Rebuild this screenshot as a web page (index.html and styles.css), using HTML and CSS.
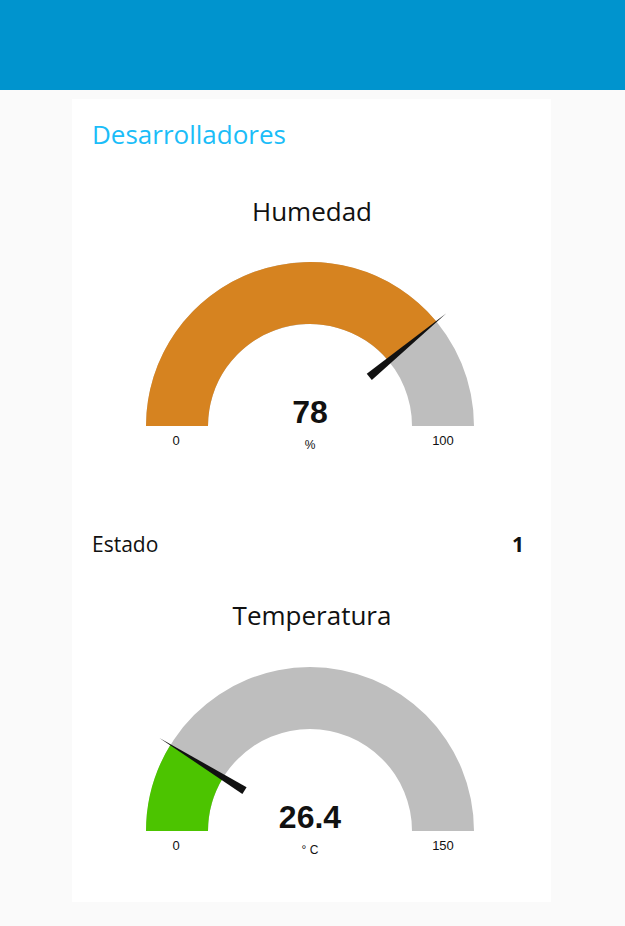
FILE: index.html
```html
<!DOCTYPE html>
<html lang="es">
<head>
<meta charset="utf-8">
<title>Dashboard</title>
<link rel="stylesheet" href="styles.css">
</head>
<body>
<header class="toolbar"></header>
<main class="content">
  <section class="card">
    <h2 class="card-title">Desarrolladores</h2>
    <div class="gauge">
      <svg class="gauge-svg" width="479" height="300" viewBox="0 0 479 300">
        <text class="g-title" x="240" y="51">Humedad</text>
        <path class="g-bg" d="M 74 256 A 164 164 0 0 1 402 256 L 340 256 A 102 102 0 0 0 136 256 Z"/>
        <path class="g-fill-orange" d="M 74 256 A 164 164 0 0 1 364.36 151.47 L 316.59 190.99 A 102 102 0 0 0 136 256 Z"/>
        <polygon class="g-needle" points="299.85,209.98 374.4,143.2 294.75,203.82"/>
        <text class="g-value" x="238" y="253">78</text>
        <text class="g-unit" x="238" y="279">%</text>
        <text class="g-limit" x="104" y="275">0</text>
        <text class="g-limit" x="371" y="275">100</text>
      </svg>
    </div>
    <div class="text-row">
      <span class="text-label">Estado</span>
      <span class="text-value">1</span>
    </div>
    <div class="gauge">
      <svg class="gauge-svg" width="479" height="300" viewBox="0 0 479 300">
        <text class="g-title" x="240" y="50">Temperatura</text>
        <path class="g-bg" d="M 74 256 A 164 164 0 0 1 402 256 L 340 256 A 102 102 0 0 0 136 256 Z"/>
        <path class="g-fill-green" d="M 74 256 A 164 164 0 0 1 98.45 169.87 L 151.21 202.43 A 102 102 0 0 0 136 256 Z"/>
        <polygon class="g-needle" points="174.58,212.16 87.4,163.04 170.38,218.96"/>
        <text class="g-value" x="238" y="253">26.4</text>
        <text class="g-unit" x="238" y="279">° C</text>
        <text class="g-limit" x="104" y="275">0</text>
        <text class="g-limit" x="371" y="275">150</text>
      </svg>
    </div>
  </section>
</main>
</body>
</html>
```

FILE: styles.css
```css
html, body {
  margin: 0;
  padding: 0;
}
body {
  background: #fafafa;
  font-family: "Open Sans", "Noto Sans", sans-serif;
  color: #111;
}
.toolbar {
  height: 90px;
  background: #0094ce;
}
.content {
  padding: 9px 0 0 72px;
}
.card {
  width: 479px;
  height: 803px;
  background: #fff;
  box-sizing: border-box;
  display: flex;
  flex-direction: column;
}
.card-title {
  margin: 0;
  padding: 17px 0 0 20px;
  height: 54px;
  font-weight: 400;
  font-size: 26px;
  line-height: 36px;
  color: #1bbdf8;
  box-sizing: content-box;
}
.gauge {
  height: 300px;
}
.gauge-svg {
  display: block;
}
.g-title {
  font-family: "Open Sans", "Noto Sans", sans-serif;
  font-size: 26px;
  fill: #111;
  text-anchor: middle;
}
.g-bg { fill: #bebebe; }
.g-fill-orange { fill: #d68320; }
.g-fill-green { fill: #4cc400; }
.g-needle { fill: #111; }
.g-value {
  font-family: "Liberation Sans", Arial, sans-serif;
  font-weight: 700;
  font-size: 32px;
  fill: #111;
  text-anchor: middle;
}
.g-unit, .g-limit {
  font-family: "Liberation Sans", Arial, sans-serif;
  font-size: 13px;
  fill: #111;
  text-anchor: middle;
}
.g-unit { font-size: 12px; }
.text-row {
  display: flex;
  justify-content: space-between;
  align-items: center;
  height: 105px;
  box-sizing: border-box;
  padding: 42px 27px 0 20px;
}
.text-label {
  font-size: 21px;
}
.text-value {
  font-size: 21px;
  font-weight: 700;
}
```
